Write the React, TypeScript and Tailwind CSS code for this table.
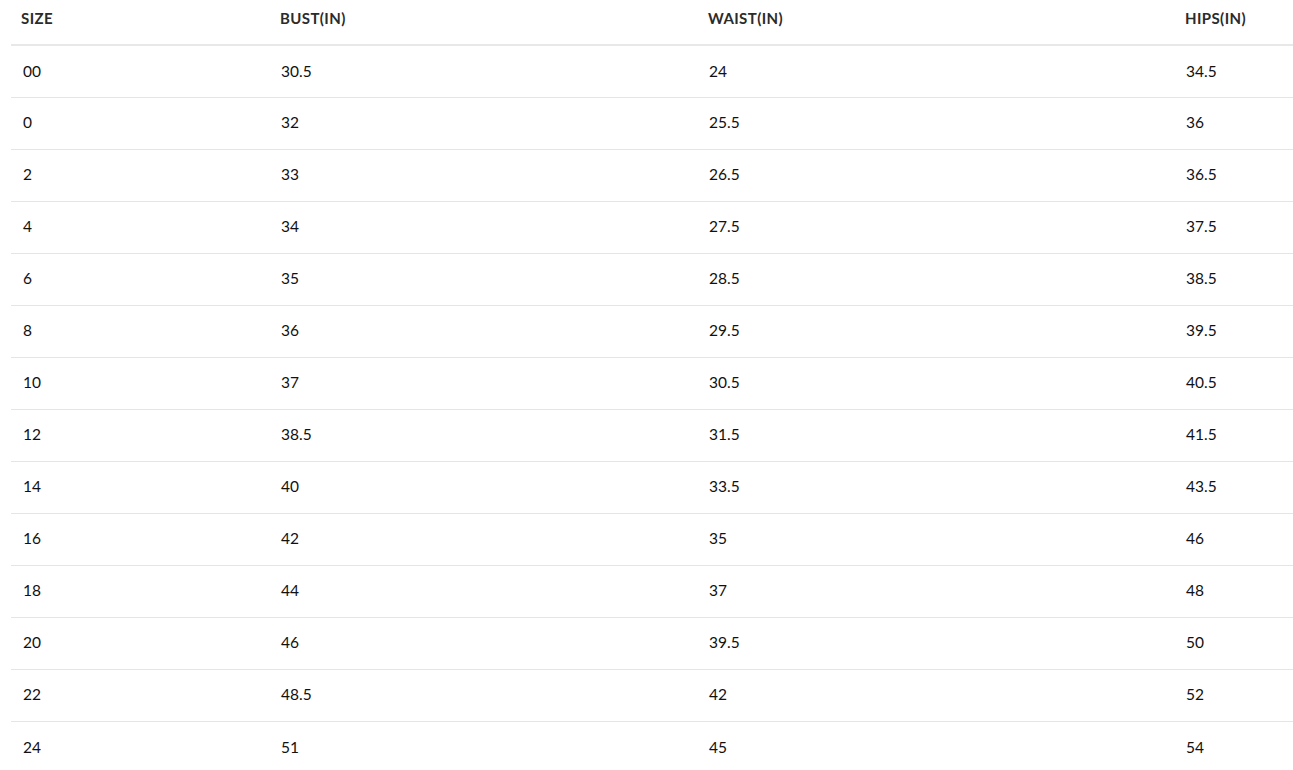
import React from 'react';

const rows: [string, string, string, string][] = [
  ['00', '30.5', '24', '34.5'],
  ['0', '32', '25.5', '36'],
  ['2', '33', '26.5', '36.5'],
  ['4', '34', '27.5', '37.5'],
  ['6', '35', '28.5', '38.5'],
  ['8', '36', '29.5', '39.5'],
  ['10', '37', '30.5', '40.5'],
  ['12', '38.5', '31.5', '41.5'],
  ['14', '40', '33.5', '43.5'],
  ['16', '42', '35', '46'],
  ['18', '44', '37', '48'],
  ['20', '46', '39.5', '50'],
  ['22', '48.5', '42', '52'],
  ['24', '51', '45', '54'],
];

const headers = ['SIZE', 'BUST(IN)', 'WAIST(IN)', 'HIPS(IN)'];
const widths = ['w-[259px]', 'w-[428px]', 'w-[477px]', 'w-[118px]'];

export default function App() {
  return (
    <div className="bg-white min-h-screen overflow-hidden font-['Lato',sans-serif]">
      <table className="ml-[11px] w-[1282px] border-collapse table-fixed">
        <thead>
          <tr className="border-b-2 border-[#e8e8e8]">
            {headers.map((h, i) => (
              <th
                key={h}
                className={`${widths[i]} h-[45px] px-[10px] pb-[7px] text-left align-middle text-[15px] tracking-[0.4px] font-bold text-[#2b2b2b]`}
              >
                {h}
              </th>
            ))}
          </tr>
        </thead>
        <tbody>
          {rows.map((r, ri) => (
            <tr key={r[0]} className={ri < rows.length - 1 ? 'border-b border-[#e5e5e5]' : ''}>
              {r.map((c, ci) => (
                <td
                  key={ci}
                  className={`h-[52px] ${ci === 0 ? 'pl-[12px]' : 'pl-[11px]'} pr-[10px] text-left align-middle text-[15.5px] text-[#111]`}
                >
                  {c}
                </td>
              ))}
            </tr>
          ))}
        </tbody>
      </table>
    </div>
  );
}
